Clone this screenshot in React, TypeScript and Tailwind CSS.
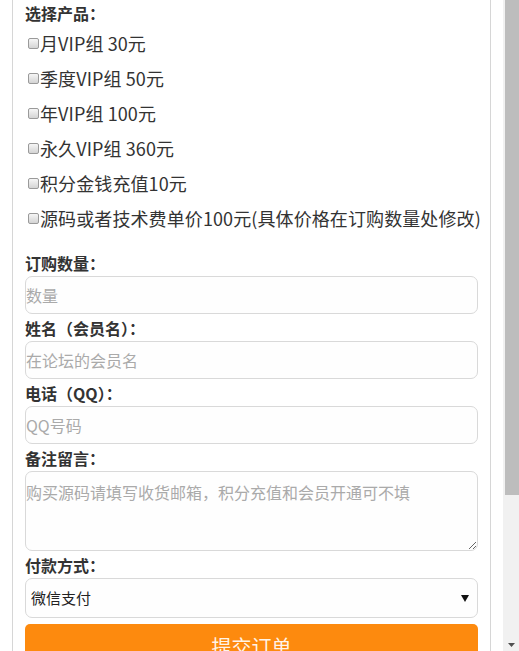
const products = [
  "月VIP组 30元",
  "季度VIP组 50元",
  "年VIP组 100元",
  "永久VIP组 360元",
  "积分金钱充值10元",
  "源码或者技术费单价100元(具体价格在订购数量处修改)",
];

const font = { fontFamily: '"Noto Sans CJK SC", "Liberation Sans", sans-serif' };

const Label = ({ children }: { children: string }) => (
  <div className="h-[27px] flex items-center text-[16px] font-bold text-[#333] leading-none">
    {children}
  </div>
);

const App = () => {
  return (
    <div className="flex h-[651px] w-[519px] overflow-hidden bg-white" style={font}>
      <div className="flex-1 pl-[12px]">
        <div className="w-[479px] h-full border-x border-[#d6d6d6] px-[12px]">
          {/* Products */}
          <div className="h-[25px] flex items-center text-[16px] font-bold text-[#333] leading-none">
            选择产品：
          </div>
          {products.map((p) => (
            <label key={p} className="h-[35px] flex items-center whitespace-nowrap text-[18px] text-[#333] leading-none">
              <span className="shrink-0 ml-[3px] mr-[1px] mt-[1px] w-[11px] h-[11px] border border-[#9a9a9a] rounded-[2px] bg-gradient-to-b from-[#f6f6f6] to-[#d4d4d4]" />
              <span className="tracking-[0.1px]">{p}</span>
            </label>
          ))}

          {/* Order form */}
          <div className="mt-[14px]">
            <Label>订购数量：</Label>
            <input
              placeholder="数量"
              className="block w-full h-[38px] px-0 border border-[#d9d9d9] rounded-[7px] bg-[#fefefe] text-[16px] text-[#333] placeholder:text-[#aaa] outline-none"
            />
            <Label>姓名（会员名）：</Label>
            <input
              placeholder="在论坛的会员名"
              className="block w-full h-[38px] px-0 border border-[#d9d9d9] rounded-[7px] bg-[#fefefe] text-[16px] text-[#333] placeholder:text-[#aaa] outline-none"
            />
            <Label>电话（QQ）：</Label>
            <input
              placeholder="QQ号码"
              className="block w-full h-[38px] px-0 border border-[#d9d9d9] rounded-[7px] bg-[#fefefe] text-[16px] text-[#333] placeholder:text-[#aaa] outline-none"
            />
            <Label>备注留言：</Label>
            <textarea
              placeholder="购买源码请填写收货邮箱，积分充值和会员开通可不填"
              className="block w-full h-[80px] px-0 pt-[8px] border border-[#d9d9d9] rounded-[7px] bg-[#fefefe] text-[16px] leading-[24px] text-[#333] placeholder:text-[#aaa] outline-none"
            />
            <Label>付款方式：</Label>
            <div className="h-[40px] flex items-center justify-between pl-[5px] pr-[8px] border border-[#d9d9d9] rounded-[7px] bg-[#fefefe] text-[15px] text-[#222]">
              <span>微信支付</span>
              <svg width="8" height="7" viewBox="0 0 8 7">
                <path d="M0 0 H8 L4 7 Z" fill="#111" />
              </svg>
            </div>
            <button className="mt-[6px] w-full h-[42px] rounded-t-[5px] bg-[#fd8a0e] text-[20px] text-[#fff4e8] leading-none pt-[4px]">
              提交订单
            </button>
          </div>
        </div>
      </div>

      {/* Scrollbar */}
      <div className="w-[16px] ml-[12px] h-full flex flex-col bg-[#f1f1f1]">
        <div className="h-[495px] ml-[2px] bg-[#bdbdbd]" />
        <div className="flex-1 flex items-end justify-center pb-[4px]">
          <svg width="7" height="4" viewBox="0 0 7 4">
            <path d="M0 0 H7 L3.5 4 Z" fill="#505050" />
          </svg>
        </div>
      </div>
    </div>
  );
};

export default App;
